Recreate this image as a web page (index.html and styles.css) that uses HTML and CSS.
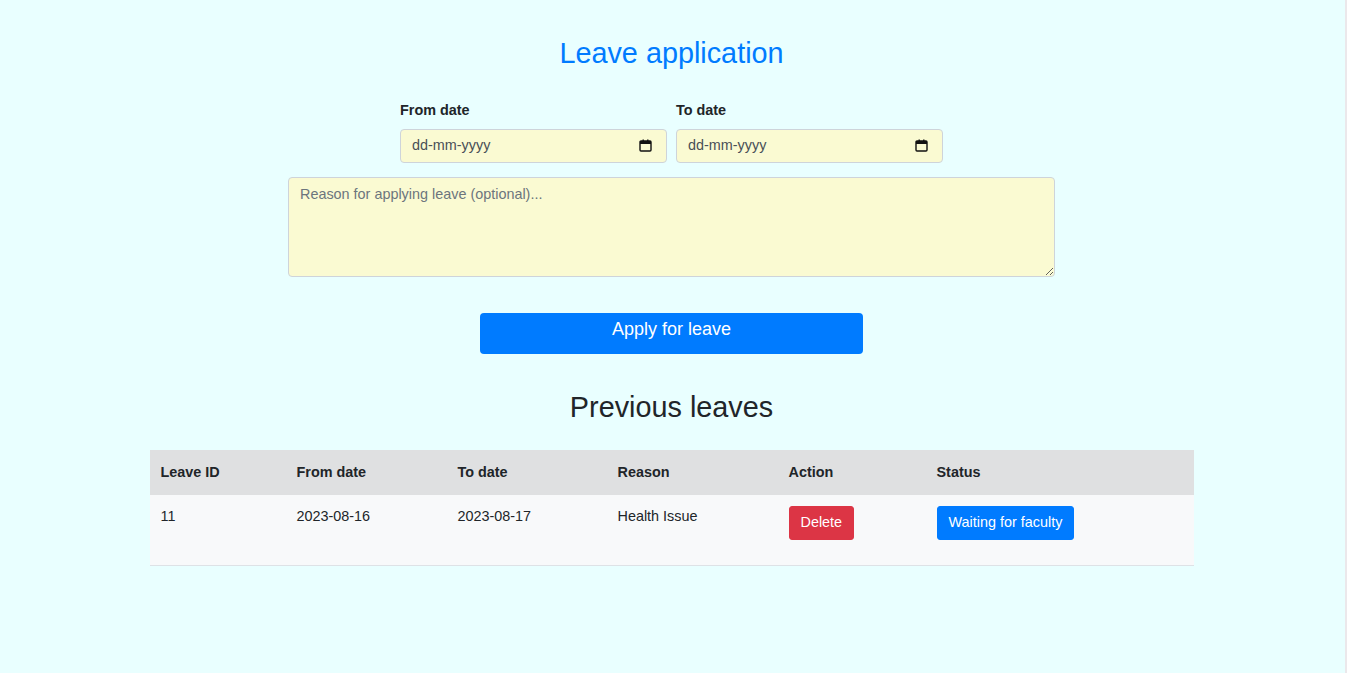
FILE: index.html
```html
<!DOCTYPE html>
<html lang="en">
<head>
<meta charset="utf-8">
<title>Leave application</title>
<link rel="stylesheet" href="styles.css">
</head>
<body>
<div class="page">
  <h2 class="title">Leave application</h2>
  <form class="leave-form">
    <div class="dates">
      <div class="field">
        <label class="label" for="from">From date</label>
        <div class="input date-input">
          <input class="date-text" type="text" id="from" placeholder="dd-mm-yyyy">
          <svg class="cal" width="13" height="13" viewBox="0 0 13 13" aria-hidden="true"><rect x="1" y="2" width="11" height="10" rx="1" fill="none" stroke="#111" stroke-width="1.4"/><rect x="1" y="2" width="11" height="3" fill="#111"/><rect x="3.5" y="0.5" width="1.4" height="2" fill="#111"/><rect x="8.1" y="0.5" width="1.4" height="2" fill="#111"/></svg>
        </div>
      </div>
      <div class="field">
        <label class="label" for="to">To date</label>
        <div class="input date-input">
          <input class="date-text" type="text" id="to" placeholder="dd-mm-yyyy">
          <svg class="cal" width="13" height="13" viewBox="0 0 13 13" aria-hidden="true"><rect x="1" y="2" width="11" height="10" rx="1" fill="none" stroke="#111" stroke-width="1.4"/><rect x="1" y="2" width="11" height="3" fill="#111"/><rect x="3.5" y="0.5" width="1.4" height="2" fill="#111"/><rect x="8.1" y="0.5" width="1.4" height="2" fill="#111"/></svg>
        </div>
      </div>
    </div>
    <textarea class="reason" placeholder="Reason for applying leave (optional)..."></textarea>
    <button type="button" class="apply">Apply for leave</button>
  </form>
  <h2 class="subtitle">Previous leaves</h2>
  <table class="leaves">
    <colgroup>
      <col class="c1"><col class="c2"><col class="c3"><col class="c4"><col class="c5"><col class="c6">
    </colgroup>
    <thead>
      <tr>
        <th>Leave ID</th>
        <th>From date</th>
        <th>To date</th>
        <th>Reason</th>
        <th>Action</th>
        <th>Status</th>
      </tr>
    </thead>
    <tbody>
      <tr>
        <td>11</td>
        <td>2023-08-16</td>
        <td>2023-08-17</td>
        <td>Health Issue</td>
        <td><button type="button" class="btn btn-danger">Delete</button></td>
        <td><button type="button" class="btn btn-primary">Waiting for faculty</button></td>
      </tr>
    </tbody>
  </table>
</div>
</body>
</html>
```
FILE: styles.css
```css
html, body {
  margin: 0;
  padding: 0;
}
body {
  background: #e9ffff;
  font-family: "Liberation Sans", Arial, sans-serif;
  color: #212529;
}
.page {
  min-height: 673px;
  border-right: 2px solid #ebe8eb;
  padding-right: 2px;
  box-sizing: border-box;
  overflow: hidden;
}
.title {
  margin: 36px 0 0;
  font-size: 28.8px;
  line-height: 34px;
  font-weight: 400;
  text-align: center;
  color: #007bff;
}
.leave-form {
  display: flex;
  flex-direction: column;
  align-items: center;
}
.dates {
  display: flex;
  gap: 9px;
  margin-top: 31px;
}
.field {
  width: 267px;
  display: flex;
  flex-direction: column;
}
.label {
  font-size: 14.4px;
  line-height: 18px;
  font-weight: 700;
  margin-bottom: 10px;
}
.input {
  box-sizing: border-box;
  height: 34px;
  width: 100%;
  background: #fafad2;
  border: 1px solid #ced4da;
  border-radius: 4px;
}
.date-input {
  display: flex;
  align-items: center;
  padding: 0 14px 2px 11px;
}
.date-text {
  flex: 1;
  min-width: 0;
  border: none;
  background: transparent;
  outline: none;
  padding: 0;
  font-family: "Liberation Sans", Arial, sans-serif;
  font-size: 14.4px;
  color: #495057;
}
.date-text::placeholder {
  color: #495057;
}
.cal {
  flex: none;
  display: block;
}
.reason {
  box-sizing: border-box;
  margin-top: 14px;
  width: 767px;
  height: 100px;
  padding: 6px 11px;
  font-family: "Liberation Sans", Arial, sans-serif;
  font-size: 14.4px;
  line-height: 20px;
  color: #495057;
  background: #fafad2;
  border: 1px solid #ced4da;
  border-radius: 4px;
}
.reason::placeholder {
  color: #6c757d;
}
.apply {
  box-sizing: border-box;
  margin-top: 36px;
  width: 383px;
  height: 41px;
  padding: 5px 0 0;
  align-self: center;
  display: flex;
  justify-content: center;
  align-items: flex-start;
  font-family: "Liberation Sans", Arial, sans-serif;
  font-size: 18px;
  line-height: 22px;
  color: #fff;
  background: #007bff;
  border: none;
  border-radius: 4px;
}
.subtitle {
  margin: 36px 0 0;
  font-size: 28.8px;
  line-height: 34px;
  font-weight: 400;
  text-align: center;
  color: #212529;
}
.leaves {
  margin: 26px auto 0;
  width: 1044px;
  border-collapse: collapse;
  font-size: 14.4px;
  table-layout: fixed;
}
.leaves th {
  background: #dfe0e1;
  text-align: left;
  font-weight: 700;
  padding: 12px 11px;
  line-height: 21px;
}
.leaves td {
  background: #f8f9fa;
  padding: 11px 11px 25px;
  line-height: 21px;
  vertical-align: top;
  border-bottom: 1px solid #dee2e6;
}
.c1 { width: 136px; }
.c2 { width: 161px; }
.c3 { width: 160px; }
.c4 { width: 171px; }
.c5 { width: 148px; }
.c6 { width: 268px; }
.btn {
  box-sizing: border-box;
  display: inline-block;
  height: 34px;
  padding: 5px 11px 7px;
  font-family: "Liberation Sans", Arial, sans-serif;
  font-size: 14.4px;
  line-height: 20px;
  color: #fff;
  border: 1px solid transparent;
  border-radius: 3px;
  vertical-align: top;
  white-space: nowrap;
}
.btn-danger {
  background: #dc3545;
  border-color: #dc3545;
}
.btn-primary {
  background: #007bff;
  border-color: #007bff;
}
```
